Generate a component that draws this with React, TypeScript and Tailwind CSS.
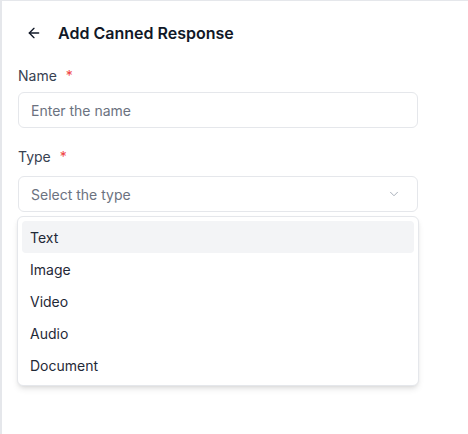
import { ArrowLeft, ChevronDown } from 'lucide-react';

const OPTIONS = ['Text', 'Image', 'Video', 'Audio', 'Document'];

export default function App() {
  return (
    <div className="h-[434px] w-[468px] overflow-hidden bg-white border-l-2 border-t border-[#e5e7eb] font-['Inter',sans-serif]">
      <div className="pl-4 pr-12">
        {/* Header */}
        <div className="flex items-center h-[64px] pl-[8px] gap-[16px]">
          <ArrowLeft size={16} strokeWidth={2} className="text-[#111827]" />
          <h1 className="text-[16px] font-semibold text-[#111827]">Add Canned Response</h1>
        </div>

        {/* Name */}
        <div>
          <label className="flex items-center gap-[9px] text-[14px] text-[#374151] leading-5 h-5 mt-[1px]">
            Name <span className="text-[#ef4444]">*</span>
          </label>
          <input
            placeholder="Enter the name"
            className="mt-[6px] w-[400px] h-[36px] px-[12px] rounded-[6px] border border-[#e5e7eb] text-[14px] placeholder-[#6b7280] outline-none"
          />
        </div>

        {/* Type */}
        <div className="mt-[19px]">
          <label className="flex items-center gap-[9px] text-[14px] text-[#374151] leading-5 h-5">
            Type <span className="text-[#ef4444]">*</span>
          </label>
          <div className="relative mt-[9px] w-[400px]">
            <button className="flex items-center justify-between w-full h-[36px] px-[12px] rounded-[6px] border border-[#e5e7eb] text-[14px] text-[#6b7280]">
              Select the type
              <ChevronDown size={14} strokeWidth={1.5} className="text-[#9ca3af] mr-[4px]" />
            </button>
            <div className="absolute -left-px top-[40px] w-[402px] rounded-[6px] border border-[#e5e7eb] bg-white p-1 shadow-md">
              {OPTIONS.map((o, i) => (
                <div
                  key={o}
                  className={`h-[32px] flex items-center px-[8px] rounded-[4px] text-[14px] text-[#1f2937] ${i === 0 ? 'bg-[#f3f4f6]' : ''}`}
                >
                  {o}
                </div>
              ))}
            </div>
          </div>
        </div>
      </div>
    </div>
  );
}
